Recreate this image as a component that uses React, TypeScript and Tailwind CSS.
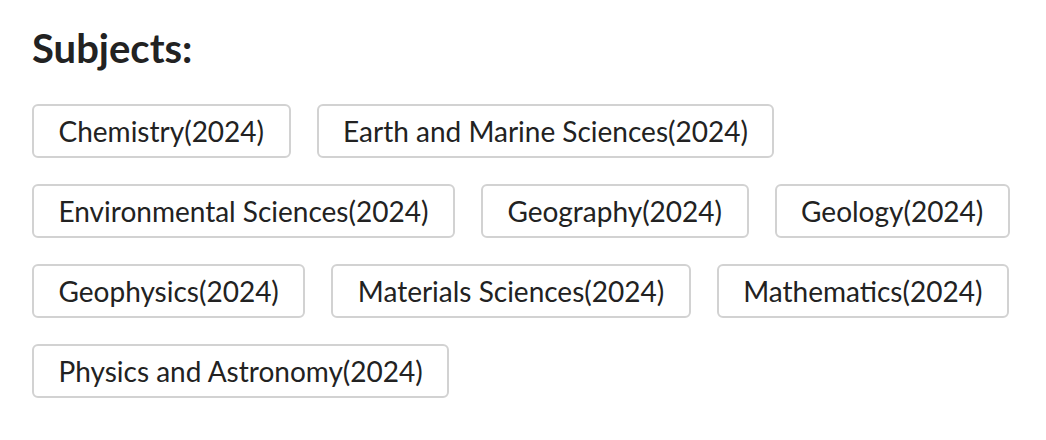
const subjects = [
  'Chemistry(2024)',
  'Earth and Marine Sciences(2024)',
  'Environmental Sciences(2024)',
  'Geography(2024)',
  'Geology(2024)',
  'Geophysics(2024)',
  'Materials Sciences(2024)',
  'Mathematics(2024)',
  'Physics and Astronomy(2024)',
];

export default function App() {
  return (
    <div
      className="w-[1046px] h-[440px] bg-white px-[32px] pt-[22px] text-[#222]"
      style={{ fontFamily: 'Lato, "Open Sans", sans-serif' }}
    >
      <h2 className="text-[40px] font-bold leading-[52px] mb-[30px]">Subjects:</h2>
      <div className="flex flex-wrap gap-[26px] w-[982px]">
        {subjects.map((s) => (
          <button
            key={s}
            className="h-[54px] px-[24.5px] border-2 border-[#d2d2d2] rounded-[6px] bg-white text-[28px] leading-none text-[#222]"
          >
            {s}
          </button>
        ))}
      </div>
    </div>
  );
}
